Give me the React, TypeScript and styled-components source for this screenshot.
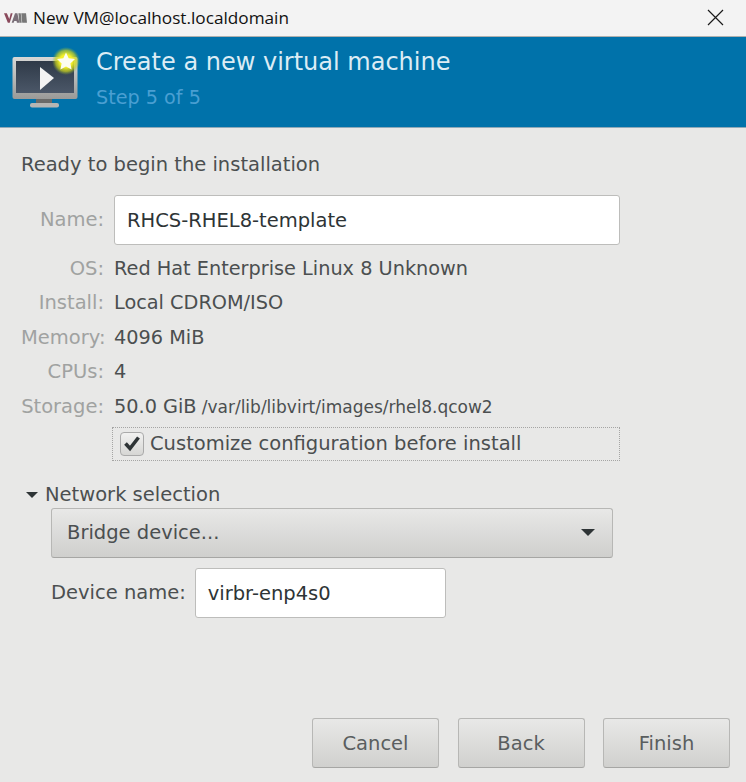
import React from "react";
import styled, { createGlobalStyle } from "styled-components";

const GlobalStyle = createGlobalStyle`
  html, body {
    margin: 0;
    padding: 0;
    background: #e8e8e7;
  }
  * {
    box-sizing: border-box;
  }
`;

const Win = styled.div`
  width: 746px;
  height: 782px;
  display: flex;
  flex-direction: column;
  overflow: hidden;
  background: #e8e8e7;
  color: #2e3436;
  font-family: "DejaVu Sans", sans-serif;
  font-size: 19.5px;
`;

const TitleBar = styled.div`
  height: 37px;
  flex: none;
  display: flex;
  align-items: center;
  padding: 0 22px 1px 4px;
  background: #f3f3f3;
  border-bottom: 1px solid #aeb0ae;
`;

const TitleText = styled.div`
  flex: 1;
  margin-left: 6px;
  font-family: "Open Sans", sans-serif;
  font-size: 17.2px;
  color: #111;
`;

const Banner = styled.div`
  height: 91px;
  flex: none;
  display: flex;
  background: #0072aa;
  border-bottom: 1px solid #8fa9b8;
  padding: 6px 0 0 12px;
`;

const BannerText = styled.div`
  margin-left: 14px;
  padding-top: 1.500px;
  display: flex;
  flex-direction: column;
`;

const BannerTitle = styled.div`
  font-size: 24px;
  line-height: 34px;
  color: #dcecf5;
`;

const BannerStep = styled.div`
  margin-top: 7px;
  font-size: 19.2px;
  line-height: 24px;
  color: #4a9fd2;
`;

const Body = styled.div`
  flex: 1;
  display: flex;
  flex-direction: column;
  padding: 25px 16px 14px 21px;
`;

const Heading = styled.div`
  line-height: 24px;
  color: #4b4f50;
`;

const Form = styled.div`
  margin-top: 18px;
  display: grid;
  grid-template-columns: 83px 506px;
  column-gap: 10px;
  row-gap: 0;
`;

const Label = styled.div`
  text-align: right;
  color: #a0a2a1;
  height: 34.4px;
  line-height: 34.4px;
`;

const Value = styled.div`
  height: 34.4px;
  line-height: 34.4px;
  font-size: 19.3px;
  white-space: nowrap;
  color: #4b4f50;
`;

const Small = styled.span`
  margin-left: -1px;
  font-size: 17px;
`;

const NameLabel = styled(Label)`
  height: 50px;
  line-height: 50px;
  margin-bottom: 7px;
`;

const TextInput = styled.div<{ $width?: number }>`
  width: ${({ $width }) => ($width ? `${$width}px` : "100%")};
  height: 50px;
  line-height: 50px;
  padding: 0 12px;
  background: #fff;
  border: 1px solid #bdbdbb;
  border-radius: 3px;
  color: #2e3436;
`;

const CheckRow = styled.div`
  grid-column: 2;
  margin: 3px 0 0 -2px;
  height: 34px;
  display: flex;
  align-items: center;
  padding-left: 7px;
  border: 1px dotted #a5a5a4;
  color: #4b4f50;
  line-height: 32px;
`;

const CheckBox = styled.div`
  width: 24px;
  height: 24px;
  margin-right: 6px;
  display: flex;
  align-items: center;
  justify-content: center;
  border: 1px solid #aaa;
  border-radius: 4px;
  background: linear-gradient(#f2f2f1, #d6d6d4);
`;

const Expander = styled.div`
  margin-top: 22px;
  height: 24px;
  line-height: 24px;
  display: flex;
  align-items: center;
  color: #4b4f50;
`;

const Arrow = styled.div`
  width: 0;
  height: 0;
  margin: 0 7px 0 5px;
  border-left: 6.5px solid transparent;
  border-right: 6.5px solid transparent;
  border-top: 6.5px solid #2e3436;
`;

const Network = styled.div`
  padding-left: 30px;
  display: flex;
  flex-direction: column;
`;

const Combo = styled.div`
  width: 562px;
  height: 50px;
  margin-top: 1px;
  display: flex;
  align-items: center;
  justify-content: space-between;
  padding: 0 17px 0 15px;
  border: 1px solid #b7b7b5;
  border-bottom-color: #a6a6a4;
  border-radius: 3px;
  background: linear-gradient(#e8e8e7, #cfcfcd);
  color: #4b4f50;
`;

const ComboArrow = styled.div`
  width: 0;
  height: 0;
  border-left: 7.5px solid transparent;
  border-right: 7.5px solid transparent;
  border-top: 7px solid #2e3436;
`;

const DeviceRow = styled.div`
  margin-top: 10px;
  display: flex;
  align-items: center;
  gap: 9px;
  color: #4b4f50;
`;

const Actions = styled.div`
  margin-top: auto;
  display: flex;
  justify-content: flex-end;
  gap: 18.500px;
`;

const ActionButton = styled.div`
  width: 127px;
  height: 50px;
  display: flex;
  align-items: center;
  justify-content: center;
  border: 1px solid #b7b7b5;
  border-bottom-color: #a6a6a4;
  border-radius: 3px;
  background: linear-gradient(#e8e8e7, #d0d0ce);
  color: #5a5e5f;
`;

const AppLogo = () => (
  <svg width="23" height="12" viewBox="0 0 24 12">
    <path d="M0 1h3l2.500 6 1.500-6h2l-3 10H4z" fill="#8a4a5c" />
    <path d="M8 11l3.500-10h2.500l2 10h-2.500l-.4-2h-2.400l-.6 2z" fill="#7a6f78" />
    <path d="M15 1h2.500l1 10H16zM18 1h2.500l1 10H19zM20.500 1H23l1 10h-2.500z" fill="#777" />
  </svg>
);

const CloseIcon = () => (
  <svg width="17" height="17" viewBox="0 0 17 17">
    <path d="M1 1l15 15M16 1L1 16" stroke="#1a1a1a" strokeWidth="1.2" fill="none" />
  </svg>
);

const NewVmIcon = () => (
  <svg width="70" height="70" viewBox="0 0 70 70">
    <defs>
      <linearGradient id="frame" x1="0" y1="0" x2="0" y2="1">
        <stop offset="0" stopColor="#d8d8d6" />
        <stop offset="1" stopColor="#9a9a98" />
      </linearGradient>
      <linearGradient id="screen" x1="0" y1="0" x2="0" y2="1">
        <stop offset="0" stopColor="#2f3a48" />
        <stop offset="1" stopColor="#4b5768" />
      </linearGradient>
      <radialGradient id="glow">
        <stop offset="0.45" stopColor="#f3f02a" />
        <stop offset="0.75" stopColor="#c9d21e" stopOpacity="0.7" />
        <stop offset="1" stopColor="#7fb040" stopOpacity="0" />
      </radialGradient>
    </defs>
    <rect x="0.5" y="14" width="65" height="42" rx="2" fill="url(#frame)" />
    <rect x="4" y="18" width="58" height="32" fill="url(#screen)" />
    <rect x="24" y="56" width="16" height="4" fill="#6a6a68" />
    <rect x="18" y="60" width="29" height="4.5" rx="2" fill="#b5b5b3" />
    <path d="M28 24l14 11-14 12z" fill="#f4f4f4" />
    <circle cx="54" cy="18" r="14" fill="url(#glow)" />
    <path
      d="M54 9.500l2.700 5.800 6.300.8-4.600 4.300 1.200 6.200-5.600-3.100-5.600 3.100 1.200-6.200-4.600-4.300 6.300-.8z"
      fill="#fdfdf0"
    />
  </svg>
);

const CheckMark = () => (
  <svg width="18" height="16" viewBox="0 0 18 16">
    <path d="M2.500 7.500l4.500 5 8.500-11" stroke="#2e3436" strokeWidth="3.600" fill="none" />
  </svg>
);

const App = () => {
  const rows = [
    { label: "OS:", value: "Red Hat Enterprise Linux 8 Unknown" },
    { label: "Install:", value: "Local CDROM/ISO" },
    { label: "Memory:", value: "4096 MiB" },
    { label: "CPUs:", value: "4" },
  ];
  return (
    <Win>
      <GlobalStyle />
      <TitleBar>
        <AppLogo />
        <TitleText>New VM@localhost.localdomain</TitleText>
        <CloseIcon />
      </TitleBar>
      <Banner>
        <NewVmIcon />
        <BannerText>
          <BannerTitle>Create a new virtual machine</BannerTitle>
          <BannerStep>Step 5 of 5</BannerStep>
        </BannerText>
      </Banner>
      <Body>
        <Heading>Ready to begin the installation</Heading>
        <Form>
          <NameLabel>Name:</NameLabel>
          <TextInput>RHCS-RHEL8-template</TextInput>
          {rows.map((r) => (
            <React.Fragment key={r.label}>
              <Label>{r.label}</Label>
              <Value>{r.value}</Value>
            </React.Fragment>
          ))}
          <Label>Storage:</Label>
          <Value>
            50.0 GiB <Small>/var/lib/libvirt/images/rhel8.qcow2</Small>
          </Value>
          <CheckRow>
            <CheckBox>
              <CheckMark />
            </CheckBox>
            Customize configuration before install
          </CheckRow>
        </Form>
        <Expander>
          <Arrow />
          Network selection
        </Expander>
        <Network>
          <Combo>
            Bridge device...
            <ComboArrow />
          </Combo>
          <DeviceRow>
            Device name:
            <TextInput $width={251}>virbr-enp4s0</TextInput>
          </DeviceRow>
        </Network>
        <Actions>
          <ActionButton>Cancel</ActionButton>
          <ActionButton>Back</ActionButton>
          <ActionButton>Finish</ActionButton>
        </Actions>
      </Body>
    </Win>
  );
};

export default App;
